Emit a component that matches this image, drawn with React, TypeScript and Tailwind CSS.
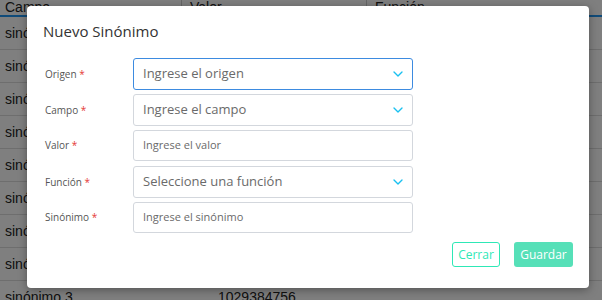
import { ChevronDown } from "lucide-react";

const filas = ["sinónimo 1", "sinónimo 2", "sinónimo 4", "sinónimo 5", "sinónimo 6", "sinónimo 7", "sinónimo 8", "sinónimo 9"];

function Etiqueta({ texto }: { texto: string }) {
    return (
        <label className="w-[90px] shrink-0 text-[10px] text-[#555] pl-[2px]">
            {texto} <span className="text-[#e53935]">*</span>
        </label>
    );
}

function Selector({ texto, activo }: { texto: string; activo?: boolean }) {
    return (
        <div
            className={
                activo
                    ? "w-[280px] h-[32px] flex items-center justify-between pl-[9px] pr-[6px] rounded-[3px] border border-[#3d8be0] bg-white"
                    : "w-[280px] h-[32px] flex items-center justify-between pl-[9px] pr-[6px] rounded-[3px] border border-[#d3d7dd] bg-white"
            }
        >
            <span className="text-[13px] text-[#6a6a6a]">{texto}</span>
            <ChevronDown size={16} strokeWidth={2} className="text-[#19c0f0]" />
        </div>
    );
}

function Campo({ texto }: { texto: string }) {
    return (
        <div className="w-[280px] h-[31px] flex items-center pl-[9px] rounded-[3px] border border-[#d3d7dd] bg-white">
            <span className="text-[11px] text-[#6a6a6a]">{texto}</span>
        </div>
    );
}

export default function App() {
    return (
        <div className="relative w-[602px] h-[300px] overflow-hidden bg-white font-['Liberation_Sans',sans-serif]">
            {/* tabla de fondo */}
            <div className="flex flex-col text-[14px] text-[#222]">
                <div className="h-[15px] flex items-end overflow-hidden">
                    <div className="w-[182px] pl-[5px] leading-[16px] border-r border-[#ccc]">Campo</div>
                    <div className="w-[185px] pl-[8px] leading-[16px] border-r border-[#ccc]">Valor</div>
                    <div className="flex-1 pl-[8px] leading-[16px]">Función</div>
                </div>
                <div className="h-[2px] bg-[#2196f3]" />
                {filas.map((f) => (
                    <div key={f} className="h-[33px] flex items-center border-b border-[#dcdcdc] pl-[5px]">
                        {f}
                    </div>
                ))}
                <div className="h-[33px] flex items-center">
                    <div className="w-[218px] pl-[5px]">sinónimo 3</div>
                    <div>1029384756</div>
                </div>
            </div>

            {/* fondo oscuro */}
            <div className="absolute inset-0 bg-black/50" />

            {/* modal */}
            <div className="absolute left-[27px] top-[6px] w-[562px] h-[282px] bg-white rounded-[4px] shadow-[0_2px_10px_rgba(0,0,0,0.35)] font-['Open_Sans',sans-serif] flex flex-col">
                <h2 className="pl-[16px] pt-[15px] text-[15px] leading-[20px] text-[#333]">Nuevo Sinónimo</h2>
                <div className="flex flex-col pl-[16px] pt-[17px]">
                    <div className="h-[36px] flex items-start">
                        <div className="h-[32px] flex items-center"><Etiqueta texto="Origen" /></div>
                        <Selector texto="Ingrese el origen" activo />
                    </div>
                    <div className="h-[36px] flex items-start">
                        <div className="h-[32px] flex items-center"><Etiqueta texto="Campo" /></div>
                        <Selector texto="Ingrese el campo" />
                    </div>
                    <div className="h-[36px] flex items-start">
                        <div className="h-[31px] flex items-center"><Etiqueta texto="Valor" /></div>
                        <Campo texto="Ingrese el valor" />
                    </div>
                    <div className="h-[36px] flex items-start">
                        <div className="h-[32px] flex items-center"><Etiqueta texto="Función" /></div>
                        <Selector texto="Seleccione una función" />
                    </div>
                    <div className="h-[36px] flex items-start">
                        <div className="h-[31px] flex items-center"><Etiqueta texto="Sinónimo" /></div>
                        <Campo texto="Ingrese el sinónimo" />
                    </div>
                </div>
                <div className="flex justify-end gap-[14px] pr-[16px] pt-[4px]">
                    <button className="w-[48px] h-[25px] rounded-[3px] border border-[#2ee8b6] text-[#2ee8b6] text-[12px] font-medium bg-white">
                        Cerrar
                    </button>
                    <button className="w-[59px] h-[25px] rounded-[3px] bg-[#56e0b8] text-white text-[12px] font-medium">
                        Guardar
                    </button>
                </div>
            </div>
        </div>
    );
}
